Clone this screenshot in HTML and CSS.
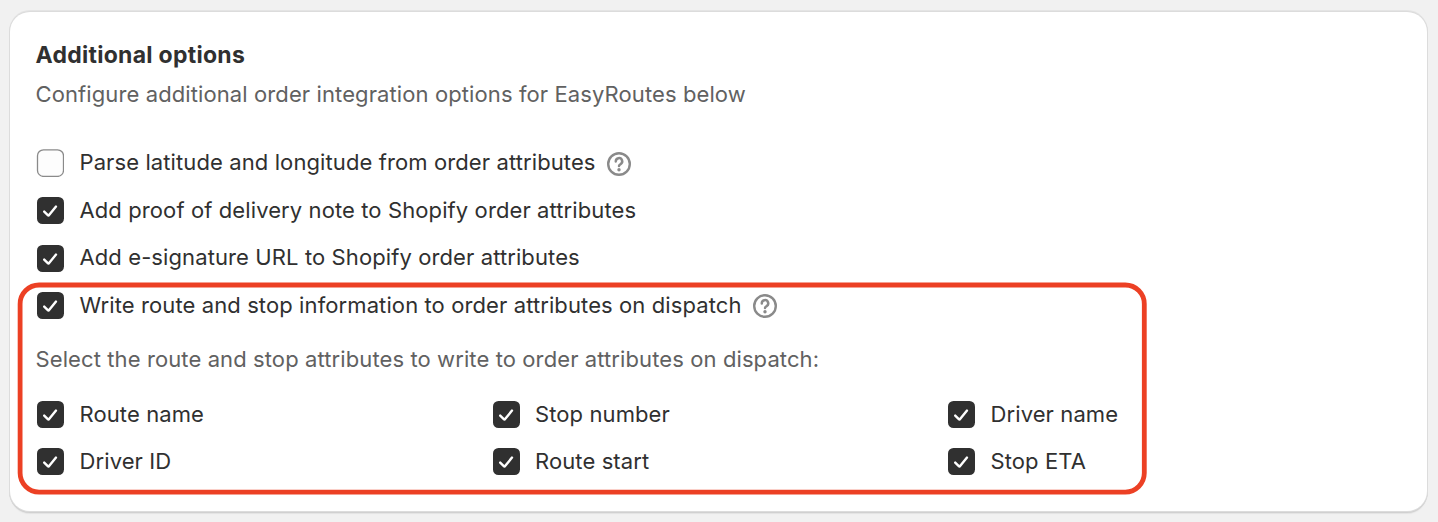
FILE: index.html
```html
<!DOCTYPE html>
<html lang="en">
<head>
<meta charset="utf-8">
<title>Additional options</title>
<link rel="stylesheet" href="styles.css">
</head>
<body>
<svg class="defs" aria-hidden="true">
  <symbol id="check" viewBox="0 0 28 28"><rect x="1" y="0" width="27" height="27" rx="5.5" fill="#303030"/><path d="M8.2 14.6 11.8 18.2Q12.5 18.9 13.1 18.1L20 9.6" fill="none" stroke="#fff" stroke-width="2.4" stroke-linecap="round" stroke-linejoin="round"/></symbol>
  <symbol id="empty" viewBox="0 0 28 28"><rect x="1.5" y="0.8" width="26" height="26.6" rx="6" fill="#fdfdfd" stroke="#8a8a8a" stroke-width="1.3"/></symbol>
  <symbol id="help" viewBox="0 0 26 26"><circle cx="13" cy="13" r="10.8" fill="none" stroke="#8a8a8a" stroke-width="2.4"/><path d="M9.8 10.4a3.2 3.2 0 1 1 4.8 2.7c-1.1.6-1.6 1.1-1.6 2" fill="none" stroke="#8a8a8a" stroke-width="2.5" stroke-linecap="round"/><circle cx="13" cy="18.7" r="1.7" fill="#8a8a8a"/></symbol>
</svg>
<main class="card">
  <h1 class="title">Additional options</h1>
  <p class="subtitle"><span>Configure additional order integration options for EasyRoutes below</span></p>
  <div class="options">
    <div class="option"><svg class="box"><use href="#empty"/></svg><span>Parse latitude and longitude from order attributes</span><svg class="help"><use href="#help"/></svg></div>
    <div class="option"><svg class="box"><use href="#check"/></svg><span>Add proof of delivery note to Shopify order attributes</span></div>
    <div class="option"><svg class="box low"><use href="#check"/></svg><span>Add e-signature URL to Shopify order attributes</span></div>
    <div class="option"><svg class="box"><use href="#check"/></svg><span>Write route and stop information to order attributes on dispatch</span><svg class="help"><use href="#help"/></svg></div>
  </div>
  <p class="prompt"><span>Select the route and stop attributes to write to order attributes on dispatch:</span></p>
  <div class="attributes">
    <div class="option"><svg class="box"><use href="#check"/></svg><span>Route name</span></div>
    <div class="option"><svg class="box"><use href="#check"/></svg><span>Stop number</span></div>
    <div class="option"><svg class="box"><use href="#check"/></svg><span>Driver name</span></div>
    <div class="option"><svg class="box"><use href="#check"/></svg><span>Driver ID</span></div>
    <div class="option"><svg class="box"><use href="#check"/></svg><span>Route start</span></div>
    <div class="option"><svg class="box"><use href="#check"/></svg><span>Stop ETA</span></div>
  </div>
  <svg class="highlight" viewBox="0 0 1132 216"><rect x="4.1" y="4" width="1124.2" height="207.1" rx="19" fill="none" stroke="#ec4024" stroke-width="4.8"/></svg>
</main>
</body>
</html>
```
FILE: styles.css
```css
* { box-sizing: border-box; }
body { margin: 0; height: 522px; padding: 12px 11px 11px 10px; background: #f1f1f1; color: #303030; font: 22px/32px Inter, sans-serif; letter-spacing: 0.103px; overflow: hidden; }
.defs { display: none; }
.card { position: relative; height: 499px; padding: 27px 26px; background: #fff; border-radius: 20px; box-shadow: 0 0 0 1px #dcdcdc, 0 -1px 0 1px #e4e4e4, 0 1px 0 1px #d0d0d0, 0 3px 1px #e3e3e3; white-space: nowrap; }
.title { margin: 0 0 0 -0.5px; font-size: 23px; line-height: 32px; font-weight: 650; letter-spacing: 0.28px; }
.subtitle { margin: 7px 0 28.4px -0.5px; color: #616161; }
.options { display: grid; grid-auto-rows: 47.6px; }
.option { display: flex; align-items: center; }
.box { width: 28px; height: 28px; margin: 1.6px 15.5px 0 0; flex: none; }
.box.low { margin-top: 3px; }
.help { width: 26px; height: 26px; margin: 3px 0 0 10.5px; }
.prompt { margin: 14.4px 0 14.9px -0.5px; color: #616161; }
.attributes { display: grid; grid-template-columns: 455.5px 455.5px 1fr; grid-auto-rows: 47.4px; }
.highlight { position: absolute; left: 6px; top: 269px; width: 1132px; height: 216px; }
```
